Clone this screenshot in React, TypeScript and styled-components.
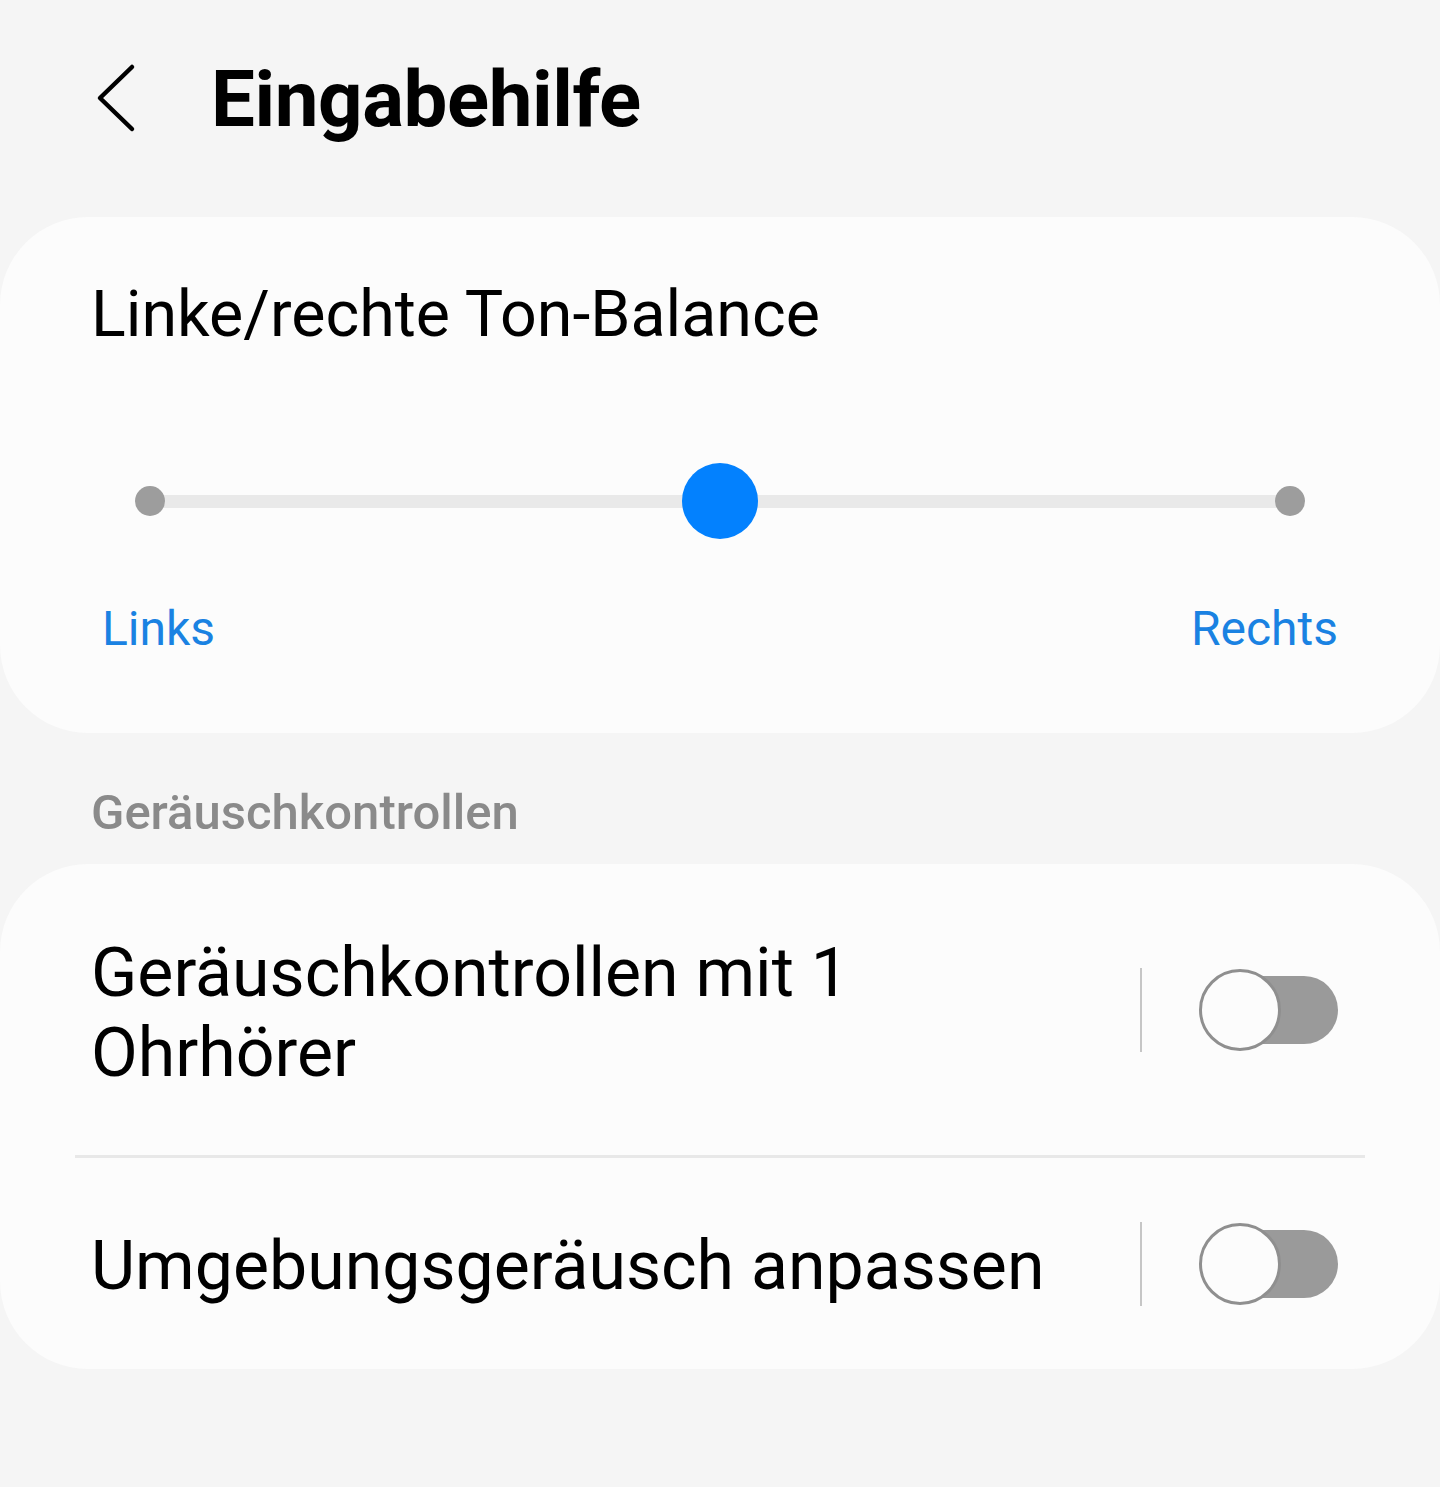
import * as React from 'react';
import styled, { createGlobalStyle } from 'styled-components';

const GlobalStyle = createGlobalStyle`
  html, body {
    margin: 0;
    padding: 0;
    background: #f5f5f5;
  }
  body {
    font-family: Roboto, "Noto Sans", "Liberation Sans", sans-serif;
    color: #000;
  }
`;

const Page = styled.div`
  min-height: 1487px;
  display: flex;
  flex-direction: column;
`;

const Header = styled.header`
  height: 217px;
  display: flex;
  align-items: flex-start;
  padding: 62px 0 0 95px;
  box-sizing: border-box;
`;

const BackButton = styled.button`
  border: none;
  background: none;
  padding: 0;
  width: 42px;
  height: 72px;
  display: flex;
  align-items: center;
  justify-content: center;
  cursor: pointer;
  margin-right: 74px;
`;

const Title = styled.h1`
  margin: 0;
  font-size: 78px;
  font-weight: 700;
  line-height: 76px;
  letter-spacing: -0.4px;
`;

const Card = styled.section<{ padTop: number; height: number }>`
  background: #fcfcfc;
  border-radius: 88px;
  height: ${(p) => p.height}px;
  box-sizing: border-box;
  padding-top: ${(p) => p.padTop}px;
  display: flex;
  flex-direction: column;
`;

const CardTitle = styled.div`
  font-size: 64.5px;
  line-height: 77px;
  padding-left: 91px;
`;

const SliderWrap = styled.div`
  margin: 110px 135px 0 135px;
  height: 76px;
  position: relative;
  display: flex;
  align-items: center;
`;

const Track = styled.div`
  flex: 1;
  height: 13px;
  margin: 0 15px;
  background: #e9e9e9;
`;

const EndDot = styled.span<{ side: 'left' | 'right' }>`
  position: absolute;
  top: 50%;
  ${(p) => (p.side === 'left' ? 'left: 0;' : 'right: 0;')}
  width: 30px;
  height: 30px;
  margin-top: -15px;
  border-radius: 50%;
  background: #9d9d9d;
`;

const Thumb = styled.span`
  position: absolute;
  top: 50%;
  left: 50%;
  width: 76px;
  height: 76px;
  margin: -38px 0 0 -38px;
  border-radius: 50%;
  background: #0381fe;
`;

const Labels = styled.div`
  display: flex;
  justify-content: space-between;
  padding: 0 102px 0 102px;
  margin-top: 62px;
`;

const SideLabel = styled.span`
  font-size: 48px;
  line-height: 56px;
  color: #1a82e2;
`;

const SectionHeader = styled.div`
  height: 131px;
  box-sizing: border-box;
  padding: 52px 0 0 91px;
  font-size: 49px;
  line-height: 56px;
  font-weight: 500;
  color: #8a8a8a;
`;

const Row = styled.div<{ height: number }>`
  height: ${(p) => p.height}px;
  display: flex;
  align-items: center;
  padding: 0 102px 0 91px;
  box-sizing: border-box;
`;

const RowText = styled.div<{ shift?: number }>`
  flex: 1;
  font-size: 68px;
  line-height: 80px;
  max-width: 980px;
  margin-right: auto;
  padding-top: ${(p) => p.shift || 0}px;
`;

const Divider = styled.div`
  height: 3px;
  background: #e8e8e8;
  margin: 0 75px;
`;

const VSep = styled.span`
  width: 2px;
  height: 84px;
  background: #c6c6c6;
  margin-right: 57px;
`;

const Switch = styled.span`
  position: relative;
  width: 139px;
  height: 82px;
  display: inline-block;
`;

const SwitchTrack = styled.span`
  position: absolute;
  left: 6px;
  right: 0;
  top: 7px;
  bottom: 7px;
  border-radius: 40px;
  background: #9a9a9a;
`;

const SwitchKnob = styled.span`
  position: absolute;
  left: 0;
  top: 0;
  width: 82px;
  height: 82px;
  box-sizing: border-box;
  border-radius: 50%;
  border: 3px solid #8f8f8f;
  background: #fcfcfc;
`;

function Toggle() {
  return (
    <>
      <VSep />
      <Switch>
        <SwitchTrack />
        <SwitchKnob />
      </Switch>
    </>
  );
}

export default function App() {
  return (
    <Page>
      <GlobalStyle />
      <Header>
        <BackButton aria-label="Zurück">
          <svg width="40" height="70" viewBox="0 0 40 70" fill="none">
            <path d="M36 4 L4 35 L36 66" stroke="#000" strokeWidth="4.5" strokeLinecap="round" strokeLinejoin="round" />
          </svg>
        </BackButton>
        <Title>Eingabehilfe</Title>
      </Header>

      <Card padTop={59} height={516}>
        <CardTitle>Linke/rechte Ton-Balance</CardTitle>
        <SliderWrap>
          <EndDot side="left" />
          <Track />
          <EndDot side="right" />
          <Thumb />
        </SliderWrap>
        <Labels>
          <SideLabel>Links</SideLabel>
          <SideLabel>Rechts</SideLabel>
        </Labels>
      </Card>

      <SectionHeader>Geräuschkontrollen</SectionHeader>

      <Card padTop={0} height={505}>
        <Row height={291}>
          <RowText shift={6}>Geräuschkontrollen mit 1 Ohrhörer</RowText>
          <Toggle />
        </Row>
        <Divider />
        <Row height={211}>
          <RowText shift={4}>Umgebungsgeräusch anpassen</RowText>
          <Toggle />
        </Row>
      </Card>
    </Page>
  );
}
